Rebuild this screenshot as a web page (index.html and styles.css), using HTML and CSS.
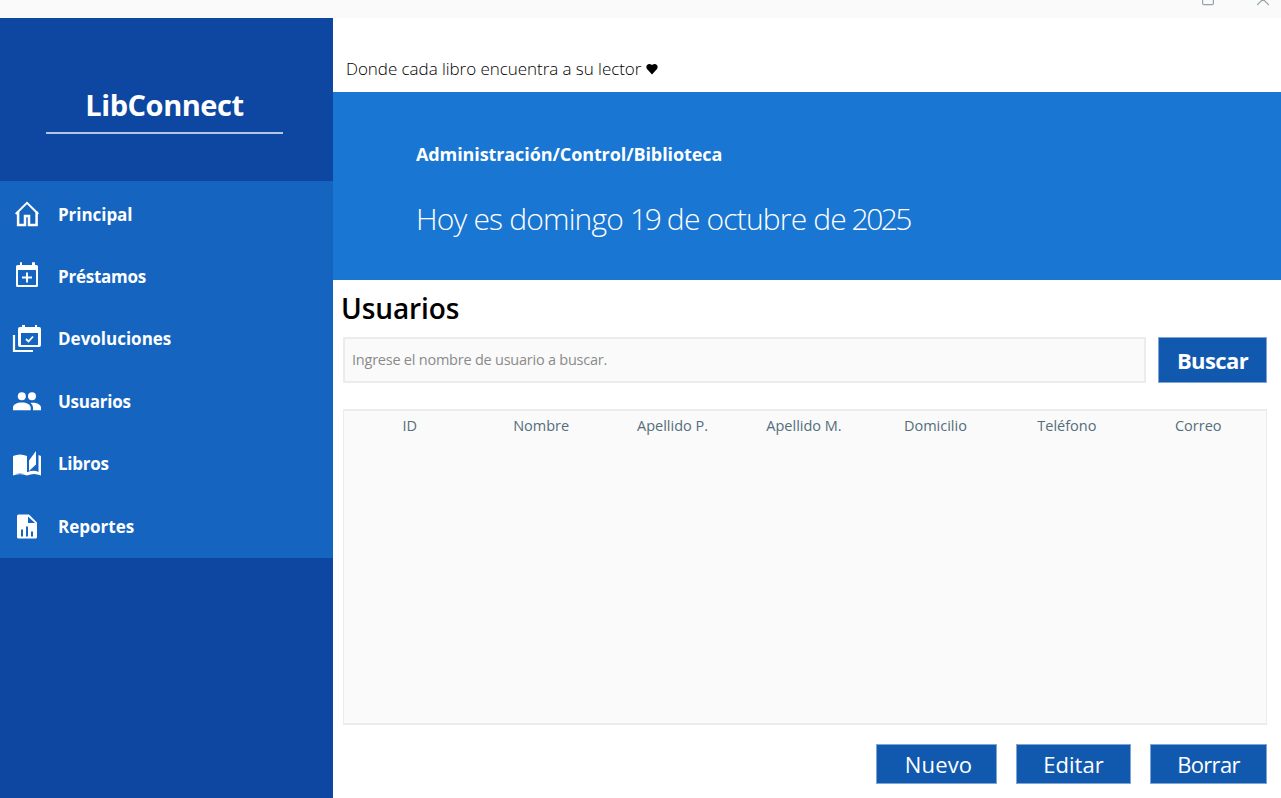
FILE: index.html
```html
<!DOCTYPE html>
<html lang="es">
<head>
<meta charset="utf-8">
<title>LibConnect</title>
<link rel="stylesheet" href="styles.css">
</head>
<body>
<header class="titlebar">
  <svg class="win-icon" viewBox="0 0 12 18"><path d="M.6 0V3.2Q.6 4.6 2 4.6H10Q11.4 4.6 11.4 3.2V0"/></svg>
  <svg class="win-icon" viewBox="0 0 12 18"><path d="M0 5.2L6-.8L12 5.2"/></svg>
</header>
<div class="app">
  <aside class="sidebar">
    <div class="brand"><span class="t brand-name">LibConnect</span></div>
    <nav class="menu">
      <a class="item"><svg class="icon" viewBox="0 0 30 30"><g fill="none" stroke="#fff" stroke-width="2"><path d="M3.700 15L15 3.800L26.300 15"/><path d="M6.100 12.500V25.900H13V17H17V25.900H24.600V12.500" stroke-width="2.500"/></g></svg><span class="t m1">Principal</span></a>
      <a class="item"><svg class="icon" viewBox="0 0 30 30"><path fill="#fff" fill-rule="evenodd" d="M8 1.2h2v2.8h10V1.2h3V4h1.5Q26 4 26 5.5V24.5Q26 26 24.500 26H5.500Q4 26 4 24.500V5.500Q4 4 5.500 4H8zM6 9V24H24V9z"/><path d="M10 16.500H20M15 11.500V21.500" stroke="#fff" stroke-width="2"/></svg><span class="t m2">Préstamos</span></a>
      <a class="item"><svg class="icon" viewBox="0 0 30 30"><path fill="#fff" fill-rule="evenodd" d="M10 2h3v2h10V2h2v2h2Q29 4 29 6V22Q29 24 27 24H8Q6 24 6 22V6Q6 4 8 4H10zM9 10V22H26V10z"/><path d="M2 12V28H21" fill="none" stroke="#fff" stroke-width="2.200"/><path d="M14 16L16.500 18.500L21 13.500" fill="none" stroke="#fff" stroke-width="1.800"/></svg><span class="t m3">Devoluciones</span></a>
      <a class="item"><svg class="icon" viewBox="0 0 30 30"><g fill="#fff"><circle cx="9.800" cy="10.200" r="4"/><circle cx="20" cy="10.200" r="4"/><path d="M1 24.300V21.500C1 18.500 5 16.500 9.800 16.500S18.700 18.500 18.700 21.500V24.300zM18.500 17C24 15.800 29 18.500 29 21.500V24.300H21V21.500Q21 18.800 18.500 17z"/></g></svg><span class="t m4">Usuarios</span></a>
      <a class="item"><svg class="icon" viewBox="0 0 30 30"><g fill="#fff"><path d="M1 8Q8 5 15 8V24.300Q22 21.500 26.500 24V7L29 8V27.500Q22 24.500 15 27.500Q8 24.500 1 27.500z"/><path d="M17 12.500L24 3V16.500L17 23z"/></g><path d="M4 26.400Q8 24.800 12 26.400" fill="none" stroke="#8fb5e2" stroke-width="1"/></svg><span class="t m5">Libros</span></a>
      <a class="item"><svg class="icon" viewBox="0 0 30 30"><path fill="#fff" fill-rule="evenodd" d="M6.500 3.500H17L25 11.500V26Q25 27.500 23.500 27.500H6.500Q5 27.500 5 26V5Q5 3.500 6.500 3.500zM16 5.500V12H23zM9 18.500V25.500H11V18.500zM14 15.500V25.500H16V15.500zM19 20.500V25.500H21V20.500z"/></svg><span class="t m6">Reportes</span></a>
    </nav>
  </aside>
  <main class="content">
    <div class="tagline"><span class="t tag">Donde cada libro encuentra a su lector</span><svg class="heart" viewBox="0 0 12 12"><path d="M6 11.500L1 6C-1 3 2-.8 6 2C10-.8 13 3 11 6z"/></svg></div>
    <section class="banner">
      <span class="t crumb">Administración/Control/Biblioteca</span>
      <span class="t date">Hoy es domingo <span class="num">19</span> de octubre de <span class="num">2025</span></span>
    </section>
    <section class="panel">
      <h1 class="t title">Usuarios</h1>
      <div class="search">
        <div class="field"><span class="t hint">Ingrese el nombre de usuario a buscar.</span></div>
        <button class="btn find"><span class="t">Buscar</span></button>
      </div>
      <div class="table">
        <div class="thead"><span>ID</span><span>Nombre</span><span>Apellido P.</span><span>Apellido M.</span><span>Domicilio</span><span>Teléfono</span><span>Correo</span></div>
      </div>
      <div class="actions">
        <button class="btn b1"><span class="t">Nuevo</span></button>
        <button class="btn b2"><span class="t">Editar</span></button>
        <button class="btn b3"><span class="t">Borrar</span></button>
      </div>
    </section>
  </main>
</div>
</body>
</html>
```
FILE: styles.css
```css
* { box-sizing: border-box; }
body { margin: 0; width: 1281px; height: 798px; overflow: hidden; background: #fff; font-family: "Open Sans", "Noto Sans", sans-serif; display: flex; flex-direction: column; }
.t { white-space: nowrap; line-height: 1; }
.titlebar { height: 18px; flex: none; background: #fafafa; display: flex; justify-content: flex-end; gap: 43px; padding-right: 12px; }
.win-icon { width: 12px; height: 18px; fill: none; stroke: #90a4ae; stroke-width: 1.2; }
.app { flex: 1; display: flex; min-height: 0; }
.sidebar { width: 333px; background: #0d47a1; flex: none; }
.brand { height: 163px; padding: 70px 50px 0 46px; }
.brand-name { display: block; height: 46px; border-bottom: 2px solid #b6c5e2; text-align: center; color: #fff; font-weight: 700; font-size: 29px; line-height: 34px; letter-spacing: -0.45px; }
.menu { height: 377px; background: #1565c0; padding-top: 1.5px; }
.item { height: 62.4px; display: flex; align-items: center; gap: 16px; padding-left: 12px; color: #fff; font-size: 17px; font-weight: 700; }
.item .t { padding-top: 1px; }
.m1 { letter-spacing: -0.05px; }
.m2 { letter-spacing: -0.25px; }
.m4, .m5 { letter-spacing: -0.25px; }
.icon { width: 30px; height: 30px; }
.content { flex: 1; display: flex; flex-direction: column; }
.tagline { height: 74px; padding: 41px 0 0 13px; display: flex; gap: 5px; align-items: flex-start; }
.tag { font-size: 17px; line-height: 19px; font-weight: 300; color: #000; letter-spacing: -0.05px; }
.heart { width: 12px; height: 12px; margin-top: 4px; }
.banner { height: 188px; background: #1976d2; color: #fff; padding: 52px 0 0 83px; display: flex; flex-direction: column; align-items: flex-start; }
.crumb { font-size: 18px; line-height: 20px; font-weight: 700; letter-spacing: -0.1px; }
.date { font-size: 30px; line-height: 36px; font-weight: 300; margin-top: 37px; letter-spacing: -0.83px; }
.num { letter-spacing: -2.4px; margin-right: 0.5px; }
.num:last-child { letter-spacing: -2.6px; margin-left: -1.3px; }
.panel { flex: 1; padding: 11px 14px 14px 10px; }
.title { margin: 0 0 0 -2px; height: 46px; font-size: 28px; line-height: 34px; font-weight: 600; color: #000; letter-spacing: -0.1px; }
.search { display: flex; gap: 12px; height: 46px; }
.field { width: 803px; border: 2px solid #ececec; background: #fafafa; display: flex; align-items: center; padding: 0 0 0 7px; }
.hint { font-size: 14.5px; color: #8a8a8a; letter-spacing: -0.23px; }
.btn { border: 1px solid #7fa5d4; background: #1159ae; color: #fff; padding: 0; font-family: inherit; display: flex; align-items: center; justify-content: center; }
.find { width: 109px; font-size: 22px; font-weight: 700; letter-spacing: -0.6px; }
.table { margin-top: 26px; height: 316px; background: #fafafa; border: 1px solid #ececec; border-top-width: 2px; border-bottom-width: 2px; }
.thead { display: grid; grid-template-columns: repeat(7, 1fr); text-align: center; font-size: 14.5px; line-height: 30px; padding-right: 2px; color: #546e7a; }
.actions { display: flex; justify-content: flex-end; gap: 19px; margin-top: 19px; height: 40px; }
.b1, .b2, .b3 { font-size: 22px; letter-spacing: 0.2px; padding-bottom: 1px; }
.b1 { width: 121px; padding-left: 4px; }
.b2 { width: 115px; letter-spacing: 0; }
.b3 { width: 117px; letter-spacing: -0.7px; }
```
